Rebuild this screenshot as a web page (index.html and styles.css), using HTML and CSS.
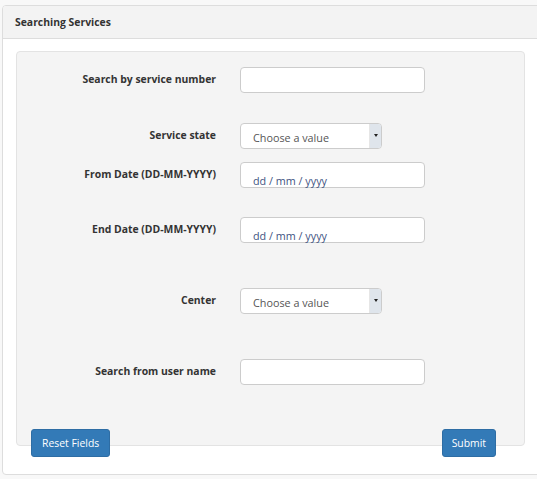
FILE: index.html
```html
<!DOCTYPE html>
<html>
<head>
<meta charset="utf-8">
<link rel="stylesheet" href="styles.css">
</head>
<body>
<div class="panel">
  <div class="panel-heading">Searching Services</div>
  <div class="panel-body">
    <div class="well">
      <div class="row r1">
        <label class="lbl">Search by service number</label>
        <div class="input"></div>
      </div>
      <div class="row r2">
        <label class="lbl">Service state</label>
        <div class="select"><span class="sel-text">Choose a value</span><span class="sel-arrow"><span class="tri"></span></span></div>
      </div>
      <div class="row r3">
        <label class="lbl">From Date (DD-MM-YYYY)</label>
        <div class="input date">dd / mm / yyyy</div>
      </div>
      <div class="row r4">
        <label class="lbl">End Date (DD-MM-YYYY)</label>
        <div class="input date">dd / mm / yyyy</div>
      </div>
      <div class="row r5">
        <label class="lbl">Center</label>
        <div class="select"><span class="sel-text">Choose a value</span><span class="sel-arrow"><span class="tri"></span></span></div>
      </div>
      <div class="row r6">
        <label class="lbl">Search from user name</label>
        <div class="input"></div>
      </div>
    </div>
    <div class="actions">
      <button class="btn">Reset Fields</button>
      <button class="btn">Submit</button>
    </div>
  </div>
</div>
</body>
</html>
```
FILE: styles.css
```css
html, body {
  margin: 0;
  padding: 0;
}
body {
  background: #f8f8f8;
  font-family: "Open Sans", "DejaVu Sans", sans-serif;
  font-size: 11px;
  color: #333;
  overflow: hidden;
  width: 537px;
  height: 479px;
}
.panel {
  margin: 5px 0 0 2px;
  width: 560px;
  height: 470px;
  box-sizing: border-box;
  border: 1px solid #dddddd;
  border-radius: 4px;
  background: #fff;
}
.panel-heading {
  height: 33px;
  box-sizing: border-box;
  background: #f3f3f3;
  border-bottom: 1px solid #dddddd;
  border-radius: 3px 3px 0 0;
  padding: 0 0 1px 12px;
  display: flex;
  align-items: center;
  font-weight: 700;
  font-size: 10.4px;
  color: #333;
}
.panel-body {
  padding: 12px 0 0 13px;
}
.well {
  width: 509px;
  height: 395px;
  box-sizing: border-box;
  background: #f4f4f4;
  border: 1px solid #e3e3e3;
  border-radius: 4px;
  padding-top: 15px;
}
.row {
  display: flex;
  align-items: center;
}
.lbl {
  width: 199px;
  margin-right: 24px;
  text-align: right;
  font-weight: 700;
  font-size: 10.4px;
  color: #333;
  padding-bottom: 3px;
}
.r2 { margin-top: 30px; }
.r3 { margin-top: 13px; }
.r4 { margin-top: 29px; }
.r5 { margin-top: 45px; }
.r6 { margin-top: 45px; }
.input {
  width: 185px;
  height: 26px;
  box-sizing: border-box;
  background: #fff;
  border: 1px solid #cccccc;
  border-radius: 4px;
}
.input.date {
  padding: 10px 0 0 12px;
  color: #3f5482;
  font-size: 10.8px;
  line-height: 15px;
}
.select {
  width: 142px;
  height: 26px;
  box-sizing: border-box;
  background: #fff;
  border: 1px solid #cccccc;
  border-radius: 4px;
  display: flex;
  align-items: stretch;
  overflow: hidden;
}
.sel-text {
  flex: 1;
  padding-left: 12px;
  display: flex;
  align-items: center;
  color: #555;
  font-size: 10.8px;
  padding-top: 2px;
}
.sel-arrow {
  width: 11px;
  background: #dfe5ec;
  border-left: 1px solid #e6e6e6;
  display: flex;
  align-items: center;
  justify-content: center;
}
.tri {
  width: 0;
  height: 0;
  border-left: 2.5px solid transparent;
  border-right: 2.5px solid transparent;
  border-top: 3px solid #222;
  margin-bottom: 2px;
}
.actions {
  display: flex;
  justify-content: space-between;
  width: 465px;
  margin: -17px 0 0 15px;
}
.btn {
  font-family: "Open Sans", "DejaVu Sans", sans-serif;
  font-size: 10.4px;
  color: #fff;
  background: #337ab7;
  border: 1px solid #2e6da4;
  border-radius: 3px;
  height: 28px;
  padding: 0 10px;
  line-height: 26px;
}
.btn + .btn {
  padding: 0 9px;
}
```
